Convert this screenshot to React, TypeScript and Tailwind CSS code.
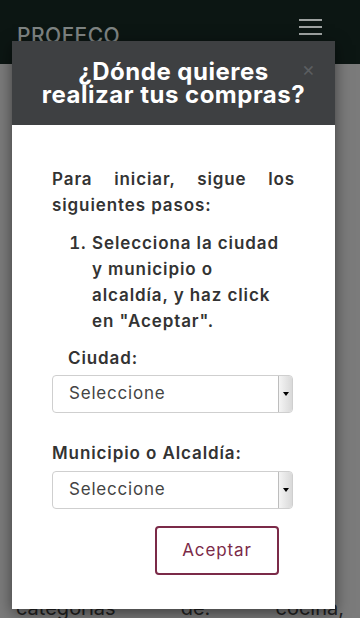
import React from "react";

const font = { fontFamily: "Inter, 'Noto Sans', sans-serif" };

const FakeSelect: React.FC<{ value: string }> = ({ value }) => {
  return (
    <div className="flex h-[38px] w-[241px] items-stretch rounded-[4px] border border-[#cfcfcf] bg-white">
      <div className="flex flex-1 items-center pl-4 text-[17px] tracking-[0.8px] text-[#444]">{value}</div>
      <div className="flex w-[14px] items-center justify-center rounded-r-[3px] border-l border-[#bdbdbd] bg-gradient-to-r from-[#f4f4f4] to-[#d9d9d9]">
        <div className="h-0 w-0 border-x-[3px] border-t-[4px] border-x-transparent border-t-black" />
      </div>
    </div>
  );
};

export default function App() {
  return (
    <div className="relative h-[618px] w-[360px] overflow-hidden bg-[#7b7b7b]" style={font}>
      {/* page behind the modal */}
      <div className="flex h-16 items-start justify-between bg-[#0c1613] pl-[17px] pr-[38px]">
        <span className="mt-[22px] text-[21px] font-medium leading-[28px] tracking-[0.5px] text-[#7e8382]">PROFECO</span>
        <div className="mt-[19px] flex w-[23px] flex-col gap-[5px]">
          <span className="h-[2px] bg-[#9ea2a1]" />
          <span className="h-[2px] bg-[#9ea2a1]" />
          <span className="h-[2px] bg-[#9ea2a1]" />
        </div>
      </div>
      <div className="px-4 pt-[532px]">
        <p className="flex justify-between text-[20px] leading-6 text-[#222]">
          <span>categorías</span>
          <span>de:</span>
          <span>cocina,</span>
        </p>
      </div>

      {/* modal */}
      <div className="absolute left-3 top-[41px] w-[323px] shadow-[0_4px_14px_rgba(0,0,0,0.5)]">
        <div className="relative flex h-[84px] flex-col items-center justify-center bg-[#3e4042]">
          <h3 className="text-center text-[24px] font-bold leading-[23px] tracking-[0.5px] text-white">
            ¿Dónde quieres
            <br />
            realizar tus compras?
          </h3>
          <button className="absolute right-[20px] top-[18px] text-[20px] leading-none text-[#5b5e60]">×</button>
        </div>
        <div className="flex h-[484px] flex-col bg-white px-10 pt-[41px]">
          <p
            className="text-justify text-[17px] font-semibold leading-[26px] tracking-[0.9px] text-[#333]"
            style={{ textAlignLast: "left" }}
          >
            Para iniciar, sigue los siguientes pasos:
          </p>
          <ol className="mt-3 list-decimal pl-10 text-[17px] font-semibold leading-[26px] tracking-[0.9px] text-[#333]">
            <li>
              Selecciona la ciudad
              <br />y municipio o
              <br />
              alcaldía, y haz click
              <br />
              en "Aceptar".
            </li>
          </ol>
          <label className="mt-[11px] pl-4 text-[17px] font-semibold leading-[26px] tracking-[0.9px] text-[#333]">Ciudad:</label>
          <div className="mt-[4px]">
            <FakeSelect value="Seleccione" />
          </div>
          <label className="mt-[27px] text-[17px] font-semibold leading-[26px] tracking-[0.9px] text-[#333]">
            Municipio o Alcaldía:
          </label>
          <div className="mt-[5px]">
            <FakeSelect value="Seleccione" />
          </div>
          <div className="mt-[17px] flex justify-end pr-[16px]">
            <button className="h-[49px] w-[124px] rounded-[4px] border-2 border-[#7b2a48] text-[17px] tracking-[0.9px] text-[#7b2a48]">
              Aceptar
            </button>
          </div>
        </div>
      </div>
    </div>
  );
}
